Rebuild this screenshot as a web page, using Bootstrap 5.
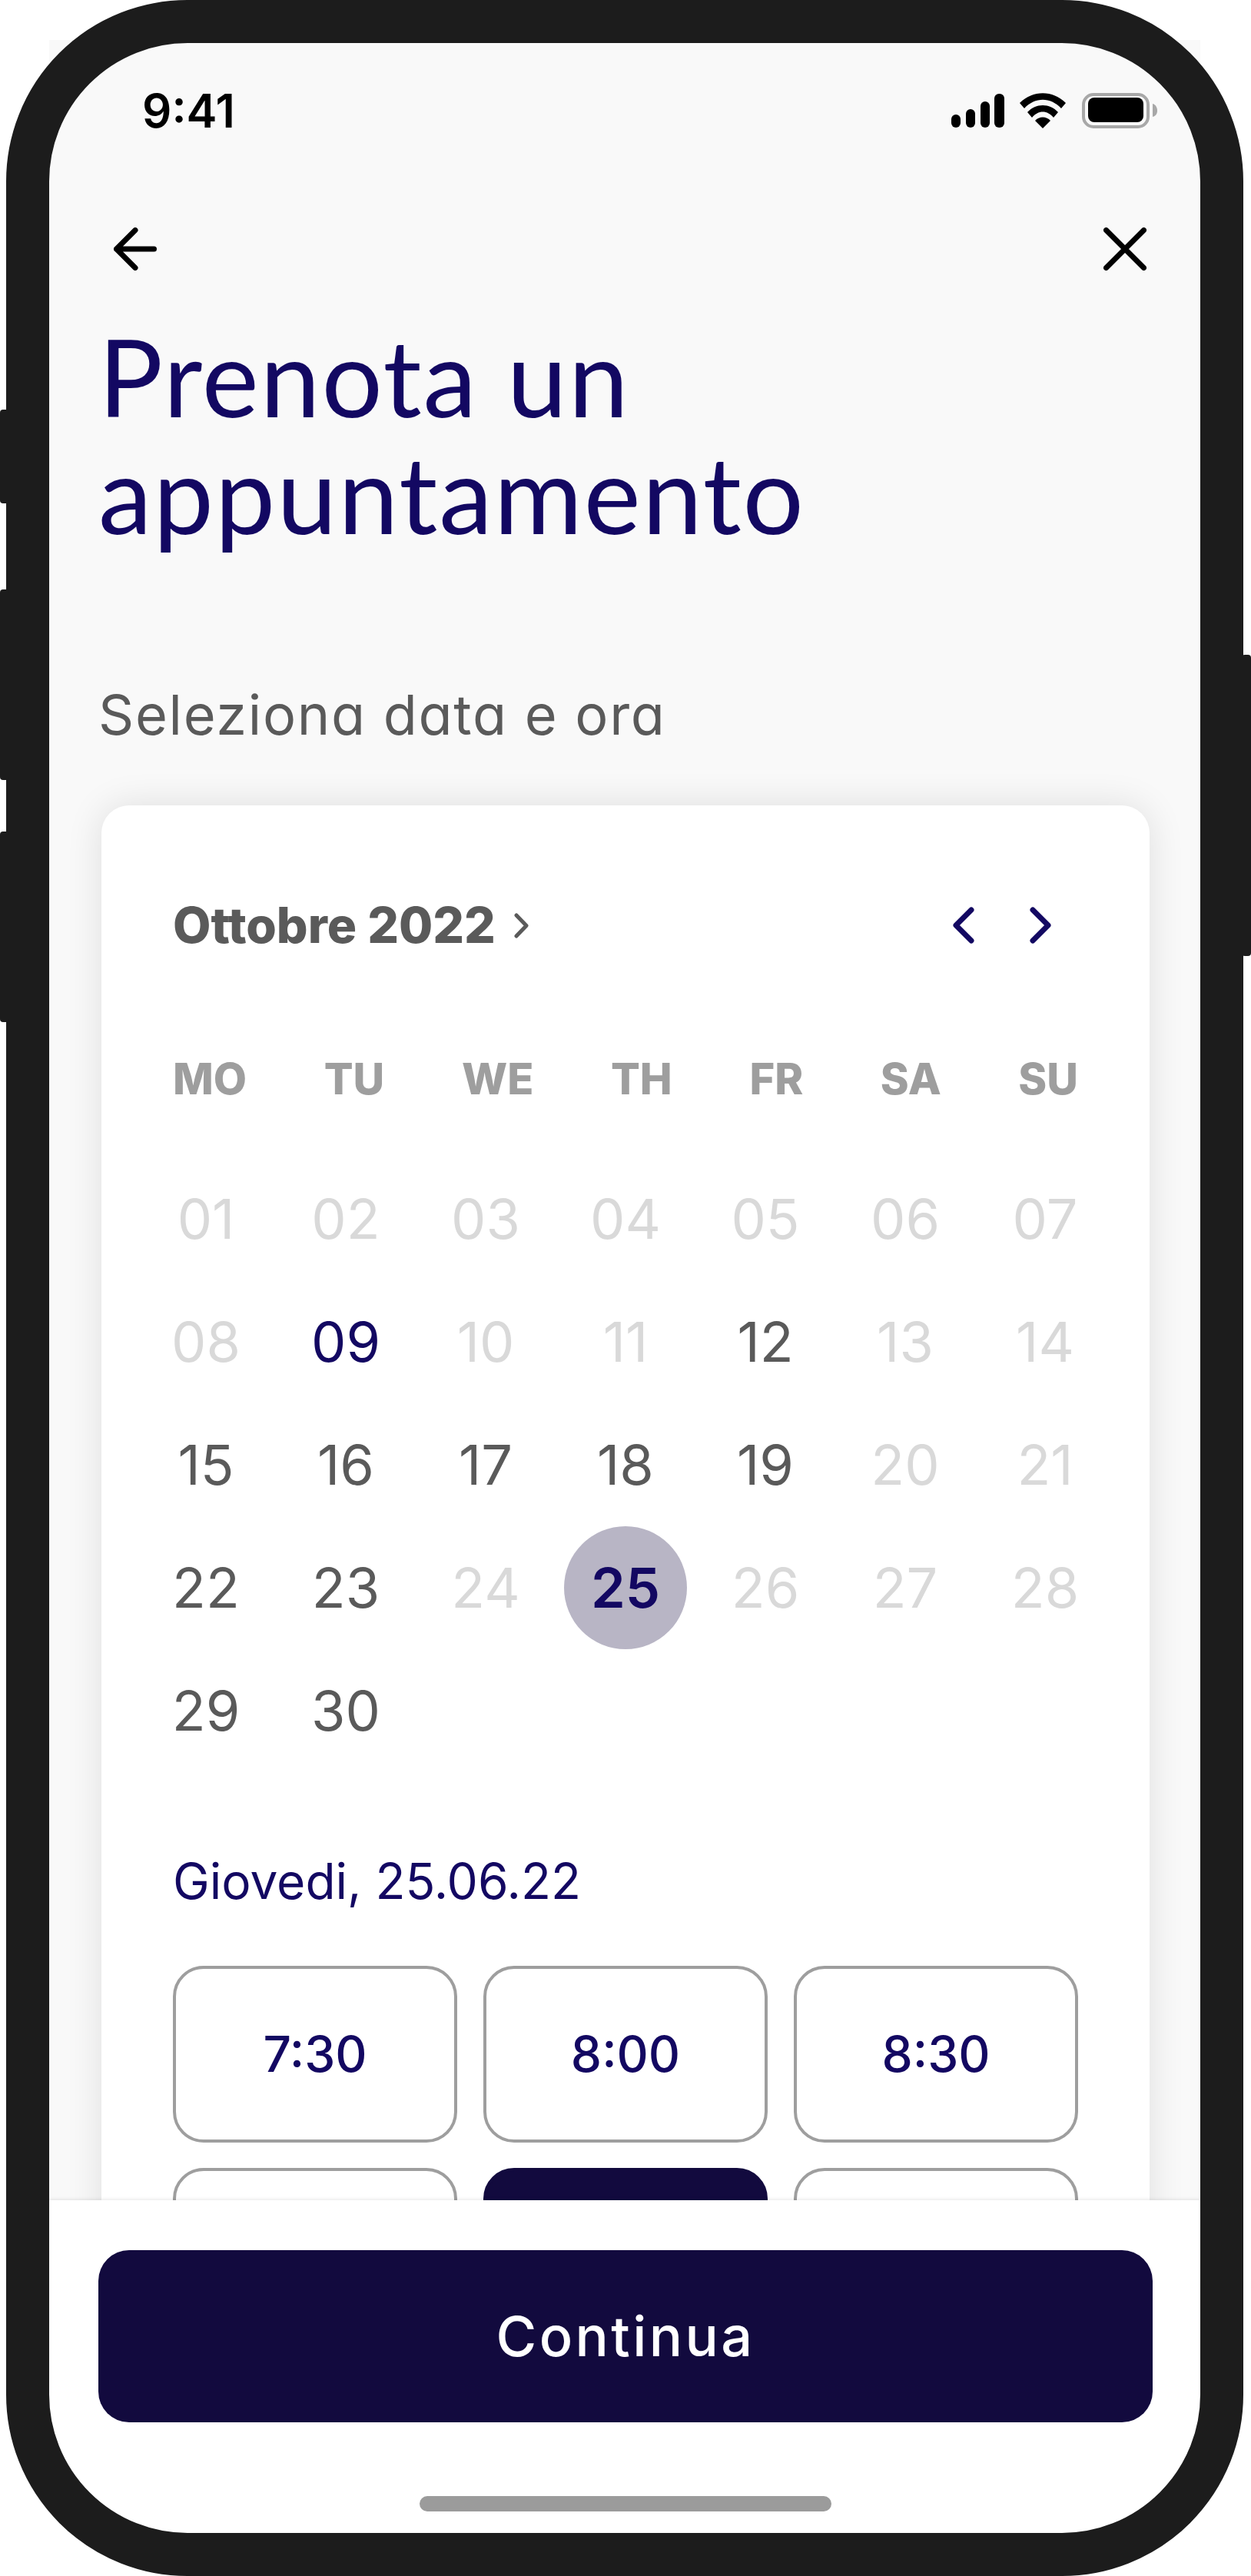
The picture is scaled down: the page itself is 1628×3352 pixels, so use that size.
<!DOCTYPE html>
<html lang="it">

<head>
    <meta charset="UTF-8">
    <meta name="viewport" content="width=device-width, initial-scale=1.0">
    <title>Prenota un appuntamento</title>

    <link href="https://cdn.jsdelivr.net/npm/bootstrap@5.3.3/dist/css/bootstrap.min.css" rel="stylesheet">
    <script src="https://cdn.jsdelivr.net/npm/bootstrap@5.3.3/dist/js/bootstrap.bundle.min.js"></script>

    <style>
        body {
            margin: 0;
            background: #fff;
            font-family: "Inter", "Liberation Sans", sans-serif;
            font-feature-settings: "cv11";
        }

        .device {
            position: relative;
            width: 1628px;
            height: 3352px;
            padding: 52px 0 0 64px;
            overflow: hidden;
        }

        .bezel {
            position: absolute;
            left: 8px;
            top: 0;
            width: 1610px;
            height: 3352px;
            border: 56px solid #1c1c1c;
            border-radius: 236px;
            pointer-events: none;
        }

        .side-key {
            position: absolute;
            width: 12px;
            background: #1c1c1c;
            border-radius: 4px;
        }

        .key-silent { left: 0; top: 533px; height: 122px; }
        .key-up { left: 0; top: 767px; height: 248px; }
        .key-down { left: 0; top: 1082px; height: 248px; }
        .key-power { right: 0; top: 852px; height: 392px; }

        .screen {
            width: 1498px;
            height: 3248px;
            background: #f9f9f9;
            overflow: hidden;
        }

        .status-row {
            height: 46px;
            margin-top: 69px;
            padding: 0 56px 0 121px;
        }

        .status-time {
            font-size: 60px;
            font-weight: 600;
            line-height: 46px;
            color: #000;
        }

        .signal-gap { margin-right: 19px; }
        .wifi-gap { margin-right: 20px; }

        .nav-row {
            height: 56px;
            margin-top: 129px;
            padding: 0 70px 0 84px;
        }

        .page-title {
            margin: 61px 0 0;
            padding-left: 64px;
            font-family: "Lato", sans-serif;
            font-size: 140px;
            font-weight: 400;
            letter-spacing: 1.900px;
            line-height: 152px;
            color: #130862;
        }

        .page-sub {
            margin: 177px 0 0;
            padding-left: 64px;
            font-size: 72px;
            letter-spacing: 1.700px;
            line-height: 72px;
            color: #5a5a5a;
        }

        .scroll-area {
            height: 2811px;
            overflow: hidden;
        }

        .cal-card {
            margin: 82px 66px 0 68px;
            padding: 132px 93px 0;
            height: 1900px;
            border: 0;
            border-radius: 36px;
            box-shadow: 0 0 48px rgba(0, 0, 0, .11);
        }

        .month-row {
            height: 48px;
            padding-right: 35px;
        }

        .month-name {
            font-size: 64px;
            font-weight: 800;
            line-height: 48px;
            color: #5a5a5a;
        }

        .chev-next { margin-left: 72px; }

        .week-row {
            margin-top: 156px;
            font-size: 56px;
            font-weight: 800;
            line-height: 41px;
            color: #9e9e9e;
        }

        .day-grid {
            display: grid;
            grid-template-columns: repeat(7, 182px);
            grid-auto-rows: 160px;
            margin: 81px -48px 0;
            font-size: 72px;
            font-weight: 400;
            color: #5a5a5a;
        }

        .day-cell {
            display: flex;
            align-items: center;
            justify-content: center;
        }

        .day-off { color: #d9d9d9; }
        .day-mark { color: #130862; }

        .day-pick {
            width: 160px;
            height: 160px;
            justify-self: center;
            border-radius: 50%;
            background: #b8b5c5;
            color: #130862;
            font-weight: 600;
        }

        .date-label {
            margin-top: 119px;
            font-size: 64px;
            line-height: 46px;
            color: #130862;
        }

        .slot-grid {
            display: grid;
            grid-template-columns: repeat(3, 370px);
            grid-auto-rows: 230px;
            gap: 33px 34px;
            margin-top: 87px;
        }

        .slot-btn {
            border: 4px solid #9e9e9e;
            border-radius: 40px;
            background: #fff;
            font-size: 64px;
            font-weight: 500;
            color: #130862;
        }

        .slot-on {
            border-color: #120a3e;
            background: #120a3e;
        }

        .sheet {
            position: relative;
            height: 437px;
            padding: 65px 62px 0 64px;
            background: #fff;
            box-shadow: 0 -1px 4px rgba(0, 0, 0, .1);
        }

        .go-btn {
            height: 224px;
            border: 0;
            border-radius: 40px;
            background: #120a3e;
            font-size: 72px;
            font-weight: 500;
            letter-spacing: 3.400px;
            color: #fff;
        }

        .home-bar {
            width: 536px;
            height: 20px;
            margin: 96px auto 0;
            border-radius: 10px;
            background: #9b9b9b;
        }
    </style>
</head>

<body>
    <div class="device">
        <div class="screen d-flex flex-column">
            <div class="scroll-area">
                <div class="status-row d-flex align-items-center justify-content-between">
                    <span class="status-time">9:41</span>
                    <div class="d-flex align-items-center">
                        <svg class="signal-gap" width="69" height="44" viewBox="0 0 69 44" fill="#000">
                            <rect x="0" y="27" width="12" height="17" rx="6" />
                            <rect x="19" y="20" width="12" height="24" rx="6" />
                            <rect x="38" y="10" width="12" height="34" rx="6" />
                            <rect x="56" y="0" width="13" height="44" rx="6" />
                        </svg>
                        <svg class="wifi-gap" width="62" height="46" viewBox="0 0 62 46" fill="#000">
                            <path d="M1 13C18-4 44-4 61 13L55 20C41 5 21 5 7 20Z" />
                            <path d="M11 25C22 13 40 13 51 25L45 32C37 22 25 22 17 32Z" />
                            <path d="M21 36C26 30 36 30 41 36L31 46Z" />
                        </svg>
                        <svg width="98" height="46" viewBox="0 0 98 46">
                            <rect x="2" y="2" width="84" height="42" rx="13" fill="none" stroke="#a8a8a8" stroke-width="4" />
                            <rect x="8" y="6" width="72" height="32" rx="8" fill="#000" />
                            <path d="M92 14C96 15 98 19 98 23C98 27 96 30 92 31Z" fill="#a8a8a8" />
                        </svg>
                    </div>
                </div>

                <div class="nav-row d-flex justify-content-between">
                    <svg width="56" height="56" viewBox="0 0 56 56" fill="none" stroke="#000" stroke-width="7" stroke-linecap="round" stroke-linejoin="round">
                        <path d="M28 3.500 3.500 28 28 52.500M3.500 28H52.500" />
                    </svg>
                    <svg width="56" height="56" viewBox="0 0 56 56" fill="none" stroke="#000" stroke-width="7" stroke-linecap="round">
                        <path d="M3.500 3.500 52.500 52.500M52.500 3.500 3.500 52.500" />
                    </svg>
                </div>

                <h1 class="page-title">Prenota un<br>appuntamento</h1>
                <p class="page-sub">Seleziona data e ora</p>

                <div class="card cal-card">
                    <div class="month-row d-flex align-items-center justify-content-between">
                        <div class="d-flex align-items-center">
                            <span class="month-name">Ottobre 2022</span>
                            <svg class="ms-4" width="19" height="33" viewBox="0 0 19 33" fill="none" stroke="#5a5a5a" stroke-width="5" stroke-linecap="round" stroke-linejoin="round">
                                <path d="M3 3 16 16.500 3 30" />
                            </svg>
                        </div>
                        <div class="d-flex align-items-center">
                            <svg width="28" height="48" viewBox="0 0 28 48" fill="none" stroke="#130862" stroke-width="7" stroke-linecap="round" stroke-linejoin="round">
                                <path d="M24 4 4 24 24 44" />
                            </svg>
                            <svg class="chev-next" width="28" height="48" viewBox="0 0 28 48" fill="none" stroke="#130862" stroke-width="7" stroke-linecap="round" stroke-linejoin="round">
                                <path d="M4 4 24 24 4 44" />
                            </svg>
                        </div>
                    </div>

                    <div class="week-row d-flex justify-content-between">
                        <span>MO</span><span>TU</span><span>WE</span><span>TH</span><span>FR</span><span>SA</span><span>SU</span>
                    </div>

                    <div class="day-grid" id="dayGrid"></div>

                    <div class="date-label">Giovedi, 25.06.22</div>

                    <div class="slot-grid">
                        <button type="button" class="btn slot-btn">7:30</button>
                        <button type="button" class="btn slot-btn">8:00</button>
                        <button type="button" class="btn slot-btn">8:30</button>
                        <button type="button" class="btn slot-btn"></button>
                        <button type="button" class="btn slot-btn slot-on"></button>
                        <button type="button" class="btn slot-btn"></button>
                    </div>
                </div>
            </div>

            <div class="sheet">
                <button type="button" class="btn go-btn w-100">Continua</button>
                <div class="home-bar"></div>
            </div>
        </div>

        <div class="bezel"></div>
        <div class="side-key key-silent"></div>
        <div class="side-key key-up"></div>
        <div class="side-key key-down"></div>
        <div class="side-key key-power"></div>
    </div>

    <script>
        // giorni del mese: quelli non prenotabili sono grigi
        const attivi = [12, 15, 16, 17, 18, 19, 22, 23, 29, 30];
        const griglia = document.getElementById('dayGrid');

        for (let giorno = 1; giorno <= 30; giorno++) {
            const cella = document.createElement('div');
            cella.className = 'day-cell';
            cella.textContent = String(giorno).padStart(2, '0');

            if (giorno === 9) {
                cella.classList.add('day-mark');
            } else if (giorno === 25) {
                cella.classList.add('day-pick');
            } else if (!attivi.includes(giorno)) {
                cella.classList.add('day-off');
            }
            griglia.appendChild(cella);
        }
    </script>
</body>

</html>
